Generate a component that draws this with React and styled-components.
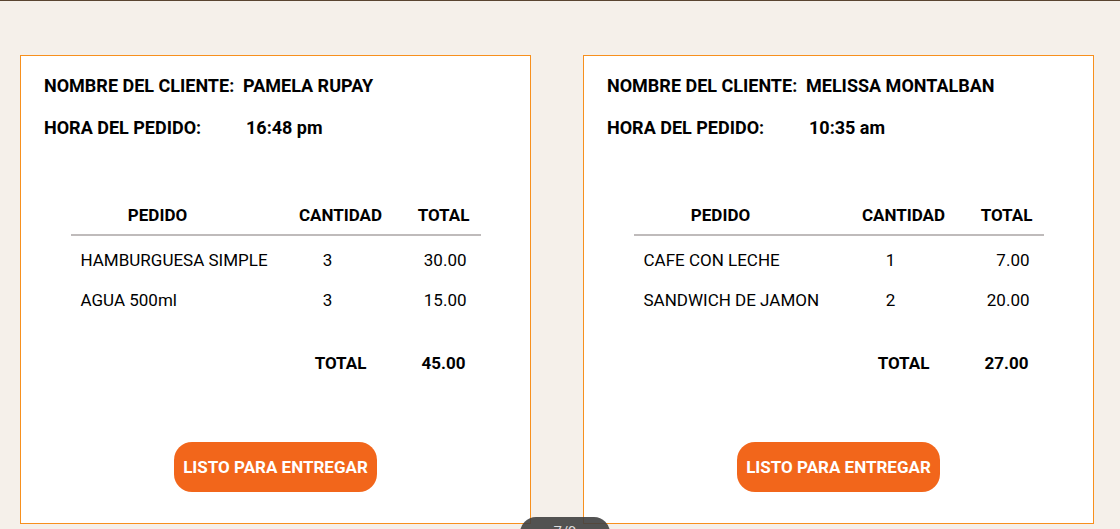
import React from 'react';
import styled, { createGlobalStyle } from 'styled-components';

const pedidos = [
    {
        id: 1,
        cliente: 'PAMELA RUPAY',
        hora: '16:48 pm',
        items: [
            { nombre: 'HAMBURGUESA SIMPLE', cantidad: 3, total: '30.00' },
            { nombre: 'AGUA 500ml', cantidad: 3, total: '15.00' },
        ],
        total: '45.00',
    },
    {
        id: 2,
        cliente: 'MELISSA MONTALBAN',
        hora: '10:35 am',
        items: [
            { nombre: 'CAFE CON LECHE', cantidad: 1, total: '7.00' },
            { nombre: 'SANDWICH DE JAMON', cantidad: 2, total: '20.00' },
        ],
        total: '27.00',
    },
];

const App = () => {
    return (
        <>
            <GlobalStyle />
            <Page>
                <Tarjetas>
                    {pedidos.map((pedido) => (
                        <Tarjeta key={pedido.id}>
                            <InfoLinea>
                                <InfoLabel $ancho="199px">NOMBRE DEL CLIENTE:</InfoLabel>
                                <span>{pedido.cliente}</span>
                            </InfoLinea>
                            <InfoLinea>
                                <InfoLabel $ancho="202px">HORA DEL PEDIDO:</InfoLabel>
                                <span>{pedido.hora}</span>
                            </InfoLinea>

                            <Tabla>
                                <Cabecera>
                                    <Th $pr="30px">PEDIDO</Th>
                                    <Th>CANTIDAD</Th>
                                    <Th>TOTAL</Th>
                                </Cabecera>
                                {pedido.items.map((item, index) => (
                                    <Fila key={index}>
                                        <Nombre>{item.nombre}</Nombre>
                                        <Cantidad>{item.cantidad}</Cantidad>
                                        <Monto>{item.total}</Monto>
                                    </Fila>
                                ))}
                                <FilaTotal>
                                    <span />
                                    <Th>TOTAL</Th>
                                    <Th>{pedido.total}</Th>
                                </FilaTotal>
                            </Tabla>

                            <Boton>LISTO PARA ENTREGAR</Boton>
                        </Tarjeta>
                    ))}
                </Tarjetas>
                <Paginador>
                    <span>‹</span>
                    <span>7/9</span>
                    <span>›</span>
                </Paginador>
            </Page>
        </>
    );
};

export default App;

/* ////////////////////////////// estilos ////////////////////////////// */

const GlobalStyle = createGlobalStyle`
    html, body {
        margin: 0;
        padding: 0;
        background: #f5f0ea;
        font-family: 'Roboto', 'Liberation Sans', sans-serif;
        overflow: hidden;
    }
`;

const Page = styled.div`
    position: relative;
    min-height: 100vh;
    box-sizing: border-box;
    border-top: 1px solid #5a4531;
    padding: 54px 0 0 20px;
    background: #f5f0ea;
`;

const Tarjetas = styled.div`
    display: grid;
    grid-template-columns: 511px 511px;
    gap: 52px;
`;

const Tarjeta = styled.div`
    display: flex;
    flex-direction: column;
    box-sizing: border-box;
    height: 469px;
    background: #fff;
    border: 1px solid #f7901e;
    padding: 19px 23px 31px 23px;
    color: #000;
`;

const InfoLinea = styled.div`
    display: flex;
    font-size: 18px;
    font-weight: bold;
    line-height: 21px;
    margin-bottom: 21px;
`;

const InfoLabel = styled.span`
    width: ${(p) => p.$ancho};
    flex-shrink: 0;
`;

const Tabla = styled.div`
    width: 410px;
    margin: 46px auto 0 auto;
    font-size: 17px;
    line-height: 20px;
`;

const Cabecera = styled.div`
    display: grid;
    grid-template-columns: 204px 132px 74px;
    padding-bottom: 9px;
    border-bottom: 2px solid #bfbbbb;
    margin-bottom: 4px;
`;

const Th = styled.span`
    font-weight: bold;
    text-align: center;
    padding-right: ${(p) => p.$pr || '0'};
`;

const Fila = styled.div`
    display: grid;
    grid-template-columns: 204px 132px 74px;
    align-items: center;
    height: 40px;
`;

const Nombre = styled.span`
    padding-left: 10px;
    white-space: nowrap;
`;

const Cantidad = styled.span`
    text-align: center;
    padding-right: 26px;
`;

const Monto = styled.span`
    text-align: right;
    padding-right: 14px;
`;

const FilaTotal = styled(Fila)`
    margin-top: 23px;
`;

const Boton = styled.button`
    margin: auto auto 0 auto;
    height: 50px;
    padding: 0 9px;
    border: none;
    border-radius: 18px;
    background: #f2661b;
    color: #fff;
    font-family: 'Roboto', 'Liberation Sans', sans-serif;
    font-size: 17px;
    font-weight: bold;
    cursor: pointer;
`;

const Paginador = styled.div`
    position: absolute;
    top: 516px;
    left: 520px;
    width: 90px;
    height: 34px;
    box-sizing: border-box;
    border-radius: 16px;
    background: rgba(64, 64, 64, 0.9);
    color: #ddd;
    display: flex;
    justify-content: center;
    gap: 14px;
    padding-top: 6px;
    font-size: 15px;
    line-height: 18px;
`;
